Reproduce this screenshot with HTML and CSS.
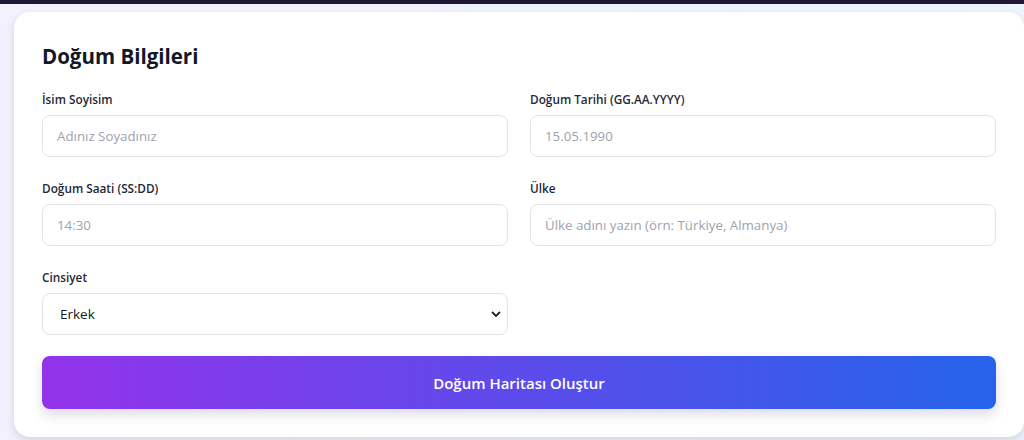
FILE: index.html
```html
<!DOCTYPE html>
<html lang="tr">
<head>
    <meta charset="UTF-8">
    <meta name="viewport" content="width=device-width, initial-scale=1.0">
    <title>Doğum Haritası</title>
    <link rel="stylesheet" href="styles.css">
</head>
<body>
    <div class="topbar"></div>

    <div class="card">
        <h2>Doğum Bilgileri</h2>
        <div class="form-grid">
            <div class="field">
                <label for="name">İsim Soyisim</label>
                <input type="text" id="name" placeholder="Adınız Soyadınız">
            </div>
            <div class="field">
                <label for="date">Doğum Tarihi (GG.AA.YYYY)</label>
                <input type="text" id="date" placeholder="15.05.1990">
            </div>
            <div class="field">
                <label for="time">Doğum Saati (SS:DD)</label>
                <input type="text" id="time" placeholder="14:30">
            </div>
            <div class="field">
                <label for="country">Ülke</label>
                <input type="text" id="country" placeholder="Ülke adını yazın (örn: Türkiye, Almanya)">
            </div>
            <div class="field">
                <label for="gender">Cinsiyet</label>
                <select id="gender">
                    <option>Erkek</option>
                    <option>Kadın</option>
                </select>
            </div>
        </div>
        <button class="submit">Doğum Haritası Oluştur</button>
    </div>
</body>
</html>
```

FILE: styles.css
```css
body { margin: 0; font-family: "Open Sans", "Noto Sans", sans-serif; background: linear-gradient(90deg, #f3f1fe, #eef3fe); min-height: 440px; overflow: hidden; }
.topbar { height: 4px; background: #1e1836; }
.card { width: 1010px; box-sizing: border-box; margin: 8px 0 0 14px; padding: 28px 28px 28px; background: white; border-radius: 16px; box-shadow: 0 4px 10px rgba(0, 0, 0, 0.12); }
.card h2 { margin: 0 0 18px; font-size: 20.5px; line-height: 32px; font-weight: 700; color: #111827; }
.form-grid { display: grid; grid-template-columns: 1fr 1fr; column-gap: 22px; row-gap: 22px; }
.field label { display: block; font-size: 11.8px; line-height: 18px; font-weight: 600; color: #1f2937; margin-bottom: 7px; }
.field input, .field select { width: 100%; height: 42px; box-sizing: border-box; border: 1px solid #e2e4e9; border-radius: 8px; padding: 0 14px; font-family: inherit; font-size: 13.3px; color: #111827; background: white; outline: none; }
.field input::placeholder { color: #9ca3af; }
.field select { padding-left: 17px; font-size: 13.5px; appearance: none; background-image: url("data:image/svg+xml,%3Csvg xmlns='http://www.w3.org/2000/svg' width='10' height='6' viewBox='0 0 10 6'%3E%3Cpath d='M1 1l4 4 4-4' fill='none' stroke='%23222' stroke-width='1.8'/%3E%3C/svg%3E"); background-repeat: no-repeat; background-position: right 6px center; }
.submit { width: 100%; height: 53px; margin-top: 21px; border: none; border-radius: 8px; background: linear-gradient(90deg, #9333ea, #2563eb); color: white; font-family: inherit; font-size: 15px; font-weight: 600; cursor: pointer; box-shadow: 0 6px 12px rgba(60, 60, 120, 0.18); }
```
